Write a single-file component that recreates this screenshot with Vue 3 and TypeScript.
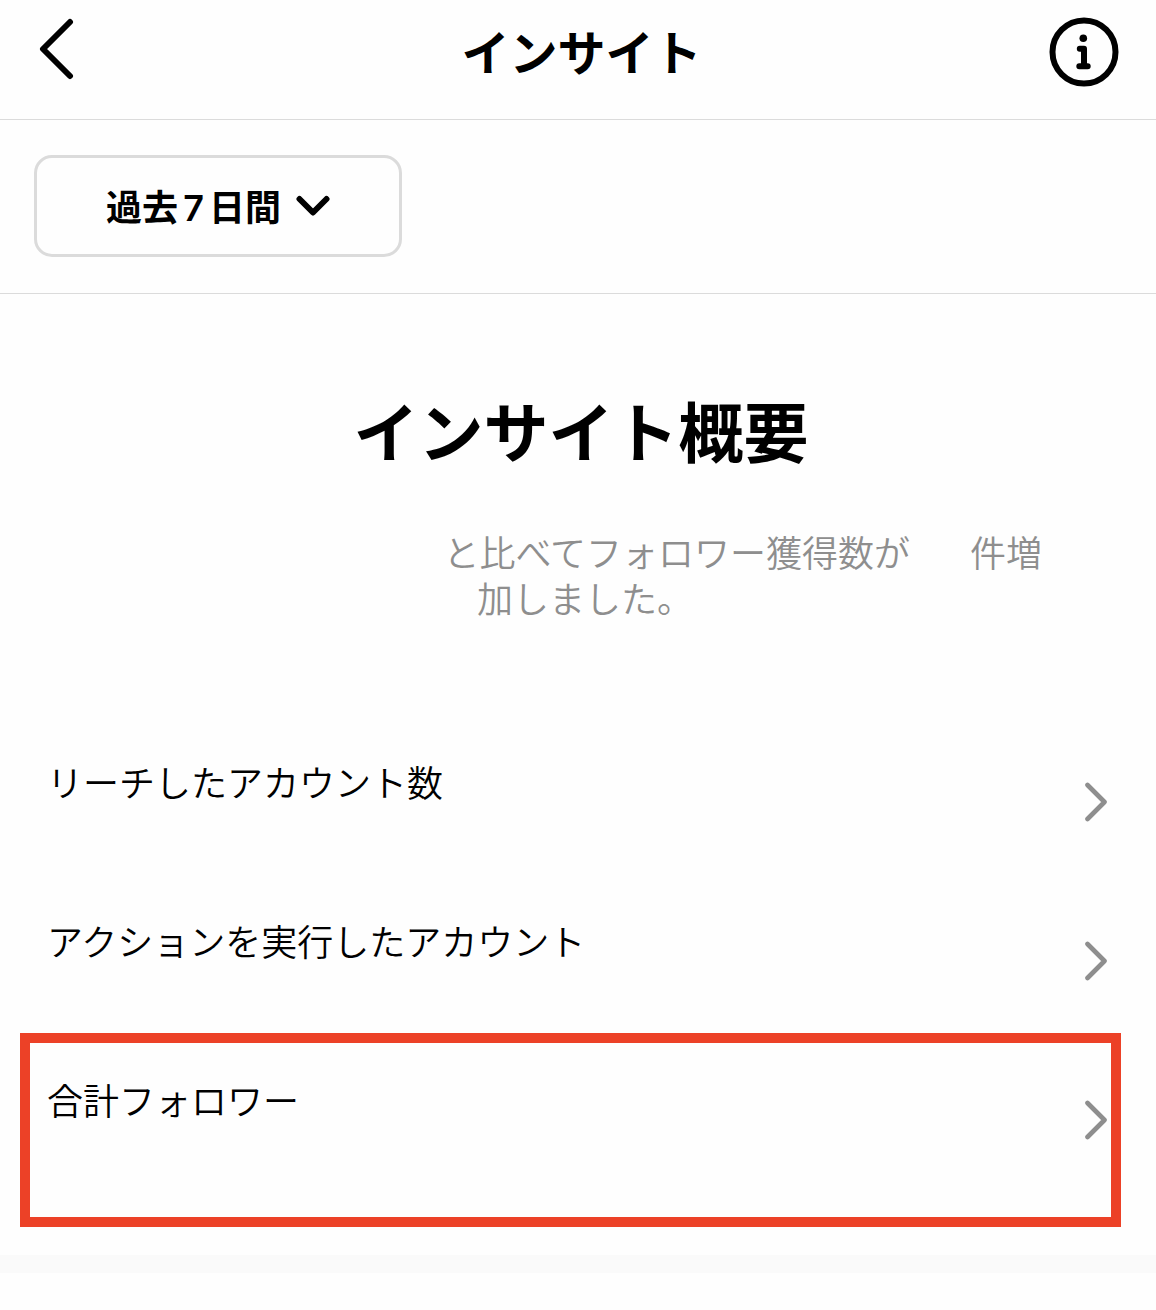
<script setup lang="ts">
interface Metric {
  label: string
  highlighted: boolean
}

const metrics: Metric[] = [
  { label: 'リーチしたアカウント数', highlighted: false },
  { label: 'アクションを実行したアカウント', highlighted: false },
  { label: '合計フォロワー', highlighted: true },
]
</script>

<template>
  <div class="page">
    <header class="header">
      <button class="icon-button" type="button" aria-label="戻る">
        <svg width="36" height="68" viewBox="0 0 36 68" fill="none" stroke="#000" stroke-width="6" stroke-linecap="round" stroke-linejoin="round">
          <path d="M32 4 5 31 32 58" />
        </svg>
      </button>
      <h1 class="title">インサイト</h1>
      <button class="icon-button end" type="button" aria-label="情報">
        <svg width="70" height="70" viewBox="0 0 70 70" fill="none" stroke="#000" stroke-linecap="round" stroke-linejoin="round">
          <circle cx="35" cy="35" r="31.5" stroke-width="6" />
          <circle cx="34.3" cy="21.3" r="3.8" fill="#000" stroke="none" />
          <path d="M30.8 31.8H35V49M30.3 49.2H38.7" stroke-width="6" />
        </svg>
      </button>
    </header>

    <div class="toolbar">
      <button class="period" type="button">
        <span>過去<span class="digit">7</span>日間</span>
        <svg width="34" height="22" viewBox="0 0 34 22" fill="none" stroke="#000" stroke-width="6" stroke-linecap="round" stroke-linejoin="round">
          <path d="M3.5 4 17 17.5 30.5 4" />
        </svg>
      </button>
    </div>

    <main>
      <h2 class="heading">インサイト概要</h2>
      <p class="summary">
        <span class="line split"><span>と比べてフォロワー獲得数が</span><span>件増</span></span>
        <span class="line">加しました。</span>
      </p>

      <ul class="metrics">
        <li v-for="m in metrics" :key="m.label" :class="{ highlighted: m.highlighted }">
          <a class="metric" href="#">
            <span class="label">{{ m.label }}</span>
            <svg width="24" height="40" viewBox="0 0 24 40" fill="none" stroke="#8e8e8e" stroke-width="4.6" stroke-linecap="round" stroke-linejoin="round">
              <path d="M3.5 3 20.5 20 3.5 37" />
            </svg>
          </a>
        </li>
      </ul>
    </main>
    <div class="separator"></div>
  </div>
</template>

<style>
body {
  background: #fefefe;
}
</style>

<style scoped>
.page {
  padding-bottom: 36px;
  color: #000;
  font-family: "Noto Sans CJK JP", sans-serif;
  font-size: 36px;
  line-height: 46px;
}

.header {
  display: grid;
  grid-template-columns: 1fr auto 1fr;
  align-items: center;
  height: 104px;
  padding: 0 37px 15px 38px;
  border-bottom: 1px solid #dbdbdb;
}

.icon-button {
  display: flex;
  justify-self: start;
  padding: 0;
  border: 0;
  background: none;
}

.icon-button.end {
  justify-self: end;
}

.title,
.heading {
  margin: 0;
  padding-left: 6px;
  font-weight: 600;
  text-align: center;
}

.title {
  padding-bottom: 4px;
  font-size: 48px;
  line-height: 64px;
}

.heading {
  padding-top: 91px;
  font-size: 65px;
  line-height: 88px;
}

.toolbar {
  padding: 35px 34px 36px;
  border-bottom: 1px solid #dbdbdb;
}

.period {
  display: flex;
  align-items: center;
  justify-content: center;
  gap: 15px;
  box-sizing: border-box;
  width: 368px;
  height: 102px;
  border: 3px solid #dbdbdb;
  border-radius: 18px;
  background: none;
  color: inherit;
  font: inherit;
  font-weight: 600;
}

.digit {
  margin: 0 5px;
  font-family: Inter, sans-serif;
}

.summary {
  margin: 55px 114px 0 128px;
  color: #8e8e8e;
  font-weight: 350;
  text-align: center;
}

.line {
  display: block;
}

.line.split {
  display: flex;
  justify-content: flex-end;
  gap: 60px;
}

.metrics {
  margin: 102px 0 0;
  padding: 0;
  list-style: none;
}

.metric {
  display: flex;
  align-items: center;
  justify-content: space-between;
  height: 159px;
  padding: 0 48px 0 47px;
  color: inherit;
  text-decoration: none;
  font-weight: 350;
}

.label {
  padding-bottom: 42px;
}

.highlighted {
  position: relative;
}

.highlighted::after {
  content: "";
  position: absolute;
  inset: -7px 35px -28px 20px;
  border: 10px solid #ec4127;
  pointer-events: none;
}

.separator {
  height: 18px;
  margin-top: 56px;
  background: #fafafa;
}
</style>
